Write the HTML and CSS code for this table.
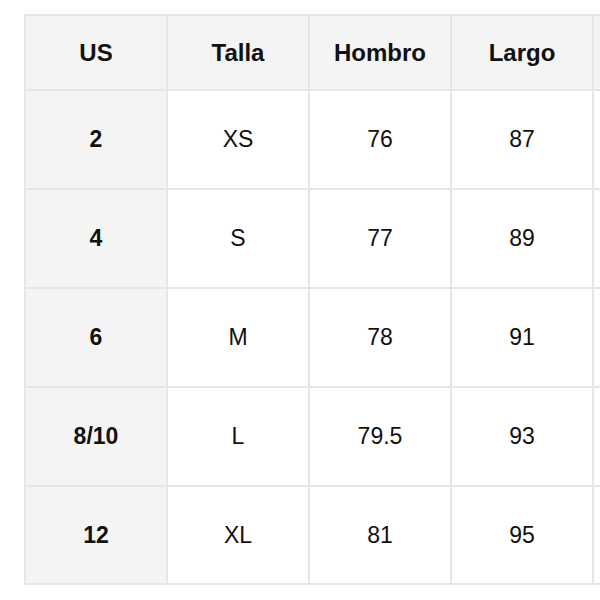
FILE: index.html
```html
<!DOCTYPE html>
<html lang="es">
<head>
<meta charset="utf-8">
<title>Tabla de tallas</title>
<link rel="stylesheet" href="styles.css">
</head>
<body>
<div class="sheet">
  <div class="grid">
    <div class="cell head">US</div>
    <div class="cell head">Talla</div>
    <div class="cell head">Hombro</div>
    <div class="cell head">Largo</div>
    <div class="cell head"></div>

    <div class="cell key">2</div>
    <div class="cell">XS</div>
    <div class="cell">76</div>
    <div class="cell">87</div>
    <div class="cell"></div>

    <div class="cell key">4</div>
    <div class="cell">S</div>
    <div class="cell">77</div>
    <div class="cell">89</div>
    <div class="cell"></div>

    <div class="cell key">6</div>
    <div class="cell">M</div>
    <div class="cell">78</div>
    <div class="cell">91</div>
    <div class="cell"></div>

    <div class="cell key">8/10</div>
    <div class="cell">L</div>
    <div class="cell">79.5</div>
    <div class="cell">93</div>
    <div class="cell"></div>

    <div class="cell key">12</div>
    <div class="cell">XL</div>
    <div class="cell">81</div>
    <div class="cell">95</div>
    <div class="cell"></div>
  </div>
</div>
</body>
</html>
```
FILE: styles.css
```css
html, body {
  margin: 0;
  padding: 0;
  background: #ffffff;
  overflow: hidden;
  width: 600px;
  height: 600px;
}
.sheet {
  padding: 14px 0 0 24px;
}
.grid {
  display: grid;
  grid-template-columns: 140px 140px 140px 140px 6px;
  grid-template-rows: 73px 97px 97px 97px 97px 96px;
  gap: 2px;
  padding: 2px 0 2px 2px;
  background: #e6e6e6;
  width: max-content;
  font-family: "Liberation Sans", Arial, sans-serif;
  color: #111111;
}
.cell {
  background: #ffffff;
  display: flex;
  align-items: center;
  justify-content: center;
  font-size: 23px;
}
.head {
  background: #f4f4f4;
  font-weight: bold;
  font-size: 24px;
}
.key {
  background: #f4f4f4;
  font-weight: bold;
}
```
